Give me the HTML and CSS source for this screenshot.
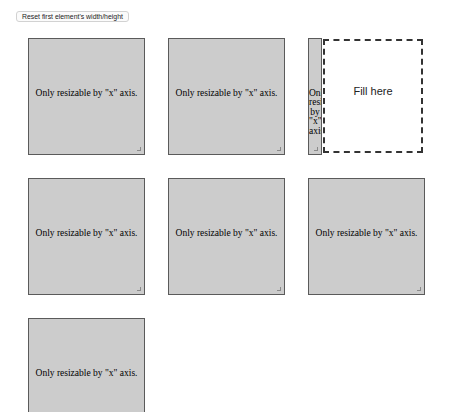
FILE: index.html
```html
<!DOCTYPE html>
<html>
<head>
<meta charset="utf-8">
<link rel="stylesheet" href="styles.css">
</head>
<body>
<div class="page">
  <button class="reset">Reset first element's width/height</button>
  <div class="grid">
    <div class="cell"><div class="box"><div class="label">Only resizable by "x" axis.</div></div></div>
    <div class="cell"><div class="box"><div class="label">Only resizable by "x" axis.</div></div></div>
    <div class="cell split">
      <div class="box narrow"><div class="label">Only resizable by "x" axis.</div></div>
      <div class="fill"><span class="fill-text">Fill here</span></div>
    </div>
    <div class="cell"><div class="box"><div class="label">Only resizable by "x" axis.</div></div></div>
    <div class="cell"><div class="box"><div class="label">Only resizable by "x" axis.</div></div></div>
    <div class="cell"><div class="box"><div class="label">Only resizable by "x" axis.</div></div></div>
    <div class="cell"><div class="box"><div class="label">Only resizable by "x" axis.</div></div></div>
  </div>
</div>
</body>
</html>
```
FILE: styles.css
```css
html, body {
  margin: 0;
  padding: 0;
  background: #ffffff;
  overflow: hidden;
}

.page {
  padding: 11px 0 0 16px;
}

.reset {
  display: block;
  margin: 0;
  height: 11px;
  padding: 0 5px;
  font-family: "Liberation Sans", Arial, sans-serif;
  font-size: 6.9px;
  line-height: 9px;
  color: #222;
  background: #fbfbfb;
  border: 1px solid #d2d2d2;
  border-radius: 3px;
  box-sizing: border-box;
}

.grid {
  display: grid;
  grid-template-columns: repeat(3, 117px);
  grid-auto-rows: 117px;
  gap: 23px;
  margin: 16px 0 0 12px;
}

.cell {
  display: flex;
}

.box {
  position: relative;
  box-sizing: border-box;
  width: 117px;
  height: 117px;
  background: #cccccc;
  border: 1px solid #5a5a5a;
  overflow: hidden;
  display: flex;
  align-items: center;
  padding-bottom: 6px;
}

.box::after {
  content: "";
  position: absolute;
  right: 3px;
  bottom: 3px;
  width: 3px;
  height: 3px;
  border-right: 1px solid #8a8a8a;
  border-bottom: 1px solid #8a8a8a;
}

.label {
  width: 100%;
  min-width: 0;
  text-align: center;
  font-family: "Liberation Serif", "Times New Roman", serif;
  font-size: 9.5px;
  line-height: 9.4px;
  color: #000;
}

.narrow {
  width: 14px;
  flex: none;
  align-items: flex-end;
  padding-bottom: 18px;
}

.fill {
  box-sizing: border-box;
  width: 100px;
  height: 114px;
  margin: 1px 0 0 1px;
  border: 2px dashed #333333;
  display: flex;
  align-items: center;
  justify-content: center;
  padding-bottom: 11px;
}

.fill-text {
  font-family: "Liberation Sans", Arial, sans-serif;
  font-size: 11px;
  color: #222;
}
```
